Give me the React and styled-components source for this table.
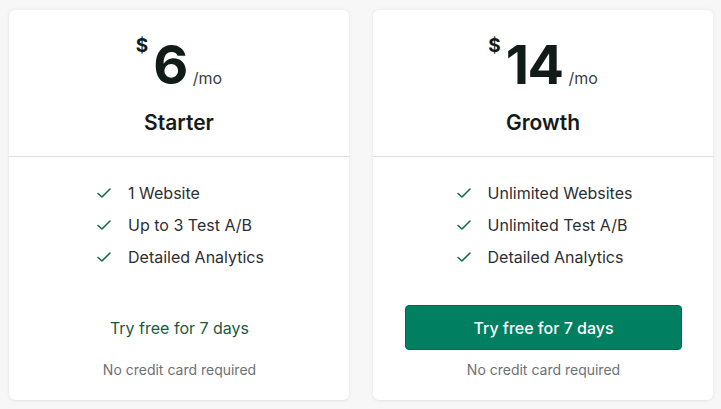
import React from "react";
import styled, { createGlobalStyle } from "styled-components";

const GlobalStyle = createGlobalStyle`
  html, body {
    margin: 0;
    padding: 0;
    background: #f7f7f7;
    font-family: Inter, "Noto Sans", "Liberation Sans", sans-serif;
  }
`;

const Page = styled.div`
  display: flex;
  gap: 24px;
  padding: 10px 8px 9px 9px;
  width: 721px;
  height: 409px;
  box-sizing: border-box;
`;

const Card = styled.div`
  width: 340px;
  background: #fff;
  border-radius: 6px;
  box-shadow: 0 0 5px rgba(0, 0, 0, 0.06), 0 1px 2px rgba(0, 0, 0, 0.04);
  display: flex;
  flex-direction: column;
`;

const Header = styled.div`
  padding: 28px 0 19px;
  display: flex;
  flex-direction: column;
  align-items: center;
  border-bottom: 1px solid #dcdcdc;
`;

const PriceRow = styled.div`
  display: flex;
  align-items: baseline;
  color: #111c18;
`;

const Currency = styled.span`
  align-self: flex-start;
  font-size: 19px;
  font-weight: 700;
  line-height: 1;
  margin-top: -2px;
  margin-right: 5px;
`;

const Amount = styled.span`
  font-size: 54px;
  font-weight: 700;
  line-height: 1;
  letter-spacing: -1.5px;
`;

const Period = styled.span`
  font-size: 16px;
  color: #3a3f44;
  margin-left: 6px;
`;

const PlanName = styled.h2`
  margin: 17px 0 0;
  font-size: 21px;
  line-height: 28px;
  font-weight: 600;
  color: #161b1a;
`;

const Body = styled.div`
  padding: 20px 31px 20px 32px;
  display: flex;
  flex-direction: column;
  align-items: center;
`;

const Features = styled.ul`
  list-style: none;
  margin: 0;
  padding: 0 0 0 2px;
`;

const Feature = styled.li`
  display: flex;
  align-items: center;
  gap: 17px;
  height: 32px;
  font-size: 16px;
  color: #2c3033;
`;

const Action = styled.button`
  margin-top: 32px;
  width: 100%;
  height: 45px;
  border-radius: 4px;
  font-family: inherit;
  font-size: 16px;
  font-weight: ${(p) => (p.$primary ? 500 : 400)};
  cursor: pointer;
  border: 1px solid ${(p) => (p.$primary ? "#006a4e" : "transparent")};
  background: ${(p) => (p.$primary ? "#008060" : "transparent")};
  color: ${(p) => (p.$primary ? "#fff" : "#1b5a3e")};
`;

const Note = styled.div`
  margin-top: 10px;
  font-size: 14px;
  line-height: 20px;
  color: #6d7175;
`;

const Check = () => (
  <svg width="14" height="14" viewBox="0 0 14 14" fill="none">
    <path d="M1 7.5 L5 11 L13 3" stroke="#0e6b4c" strokeWidth="1.6" strokeLinecap="round" strokeLinejoin="round" />
  </svg>
);

const plans = [
  {
    price: "6",
    name: "Starter",
    features: ["1 Website", "Up to 3 Test A/B", "Detailed Analytics"],
    primary: false,
  },
  {
    price: "14",
    name: "Growth",
    features: ["Unlimited Websites", "Unlimited Test A/B", "Detailed Analytics"],
    primary: true,
  },
];

const PlanCard = ({ plan }) => (
  <Card>
    <Header>
      <PriceRow>
        <Currency>$</Currency>
        <Amount>{plan.price}</Amount>
        <Period>/mo</Period>
      </PriceRow>
      <PlanName>{plan.name}</PlanName>
    </Header>
    <Body>
      <Features>
        {plan.features.map((f) => (
          <Feature key={f}>
            <Check />
            {f}
          </Feature>
        ))}
      </Features>
      <Action $primary={plan.primary}>Try free for 7 days</Action>
      <Note>No credit card required</Note>
    </Body>
  </Card>
);

export default function App() {
  return (
    <>
      <GlobalStyle />
      <Page>
        {plans.map((p) => (
          <PlanCard key={p.name} plan={p} />
        ))}
      </Page>
    </>
  );
}
